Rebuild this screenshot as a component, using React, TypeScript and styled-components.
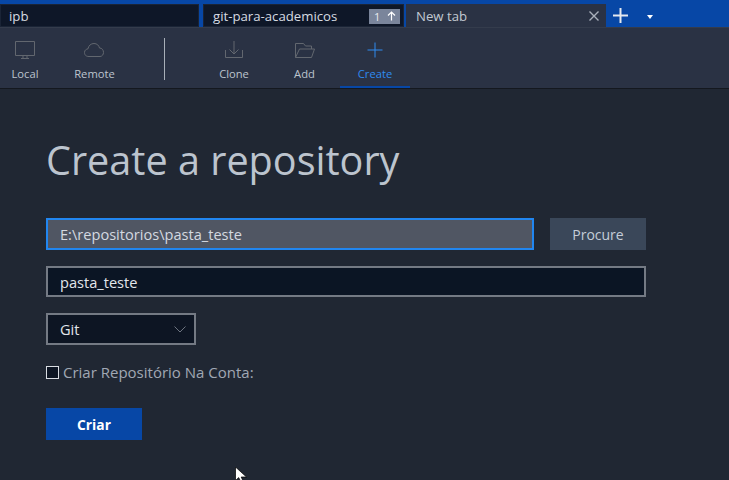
import React from "react";
import styled, { createGlobalStyle } from "styled-components";

const Global = createGlobalStyle`
  html, body { margin: 0; padding: 0; background: #202733; }
  body { font-family: "Open Sans", "Noto Sans", sans-serif; }
  #root { width: 729px; height: 480px; overflow: hidden; }
`;

const Page = styled.div`
  position: relative;
  width: 729px;
  height: 480px;
  background: #202733;
  overflow: hidden;
`;

const TabBar = styled.div`
  display: flex;
  align-items: stretch;
  height: 27px;
  padding-top: 4px;
  box-sizing: border-box;
  background: #0747a6;
`;

const Tab = styled.div<{ $width: number; $gap: number; $active?: boolean; $inset: number }>`
  display: flex;
  align-items: center;
  box-sizing: border-box;
  width: ${(p) => p.$width}px;
  margin-right: ${(p) => p.$gap}px;
  padding: 1px ${(p) => (p.$active ? 7 : 4)}px 0 ${(p) => p.$inset}px;
  font-size: 13.2px;
  color: ${(p) => (p.$active ? "#c2c9d2" : "#d6dbe2")};
  background: ${(p) => (p.$active ? "#2a3244" : "#0e1728")};
  box-shadow: ${(p) => (p.$active ? "none" : "inset 0 0 0 1px #1a2436")};
`;

const TabTitle = styled.span`
  flex: 1;
  white-space: nowrap;
`;

const Badge = styled.span`
  display: flex;
  align-items: center;
  justify-content: space-between;
  width: 31px;
  height: 15px;
  padding: 0 4px 0 5px;
  box-sizing: border-box;
  font-size: 11px;
  background: #7a859b;
  color: #e8ebf0;
`;

const AddTab = styled.div`
  display: flex;
  align-items: center;
  margin-left: 7px;
  width: 16px;
`;

const Caret = styled.div`
  width: 0;
  height: 0;
  margin: 11px 0 0 18px;
  border-left: 3.5px solid transparent;
  border-right: 3.5px solid transparent;
  border-top: 4px solid #fff;
`;

const Toolbar = styled.div`
  display: flex;
  align-items: stretch;
  height: 62px;
  padding-top: 1px;
  box-sizing: border-box;
  background: #2a3244;
  border-top: 1px solid #343c4c;
  border-bottom: 1px solid #14181f;
`;

const ToolButton = styled.div<{ $width: number; $active?: boolean }>`
  display: flex;
  flex-direction: column;
  align-items: center;
  width: ${(p) => p.$width}px;
  height: 59px;
  box-sizing: border-box;
  padding-top: 9px;
  font-size: 11.2px;
  line-height: 15px;
  color: ${(p) => (p.$active ? "#2f8bf0" : "#bcc4ce")};
  border-bottom: 2px solid ${(p) => (p.$active ? "#0747a6" : "transparent")};
`;

const ToolIcon = styled.svg<{ $active?: boolean }>`
  width: 24px;
  height: 24px;
  margin-bottom: 4px;
  fill: none;
  stroke: ${(p) => (p.$active ? "#2f8bf0" : "#62676f")};
  stroke-width: 1;
`;

const ToolDivider = styled.div`
  width: 1px;
  height: 42px;
  margin: 9px 34px 0 25px;
  background: #a8afb8;
`;

const Content = styled.main`
  display: flex;
  flex-direction: column;
  padding: 46px 0 0 46px;
`;

const Title = styled.h1`
  margin: 0 0 33px;
  height: 50px;
  font-size: 39.6px;
  line-height: 50px;
  font-weight: 400;
  color: #bcc4ce;
`;

const PathRow = styled.div`
  display: flex;
  gap: 16px;
  margin-bottom: 16px;
`;

const Field = styled.div<{ $width: number; $focus?: boolean }>`
  display: flex;
  align-items: center;
  box-sizing: border-box;
  width: ${(p) => p.$width}px;
  height: ${(p) => (p.$focus ? 32 : 31)}px;
  padding-left: 12px;
  font-size: 14.6px;
  color: ${(p) => (p.$focus ? "#d4d9e0" : "#e2e6eb")};
  background: ${(p) => (p.$focus ? "#505663" : "#0b1524")};
  border: 2px solid ${(p) => (p.$focus ? "#2186f0" : "#747a84")};
`;

const Browse = styled.div`
  display: flex;
  align-items: center;
  justify-content: center;
  width: 96px;
  height: 32px;
  font-size: 14px;
  color: #c4cdd8;
  background: #3a4759;
`;

const Select = styled.div`
  display: flex;
  align-items: center;
  justify-content: space-between;
  box-sizing: border-box;
  width: 150px;
  height: 32px;
  margin-top: 16px;
  padding: 0 8px 0 12px;
  font-size: 14.6px;
  color: #e2e6eb;
  background: #0d1523;
  border: 2px solid #747a84;
`;

const CheckRow = styled.label`
  display: flex;
  align-items: center;
  gap: 4px;
  margin-top: 17px;
  height: 20px;
  font-size: 15px;
  color: #a0a8b4;
`;

const CheckBox = styled.span`
  width: 13px;
  height: 13px;
  box-sizing: border-box;
  background: #0d1523;
  border: 1px solid #d8dce2;
`;

const Submit = styled.div`
  display: flex;
  align-items: center;
  justify-content: center;
  width: 96px;
  height: 32px;
  margin-top: 26px;
  font-size: 13.8px;
  font-weight: 700;
  color: #fff;
  background: #0747a6;
`;

const Cursor = styled.svg`
  position: absolute;
  left: 235px;
  top: 467px;
  width: 12px;
  height: 14px;
`;

export default function App() {
  return (
    <Page>
      <Global />
      <TabBar>
        <Tab $width={199} $gap={4} $inset={9}>
          <TabTitle>ipb</TabTitle>
        </Tab>
        <Tab $width={201} $gap={2} $inset={10}>
          <TabTitle>git-para-academicos</TabTitle>
          <Badge>
            1
            <svg width="9" height="10" viewBox="0 0 9 10" fill="none" stroke="#fff" strokeWidth="1.2">
              <path d="M4.5 9.5V1M1 4.5 4.5 1 8 4.5" />
            </svg>
          </Badge>
        </Tab>
        <Tab $width={200} $gap={0} $active $inset={10}>
          <TabTitle>New tab</TabTitle>
          <svg width="10" height="10" viewBox="0 0 10 10" stroke="#a9b0bb" strokeWidth="1.4">
            <path d="M0.5 0.5 9.5 9.5M9.5 0.5 0.5 9.5" />
          </svg>
        </Tab>
        <AddTab>
          <svg width="15" height="15" viewBox="0 0 15 15" stroke="#e4e8ee" strokeWidth="2">
            <path d="M7.5 0V15M0 7.5H15" />
          </svg>
        </AddTab>
        <Caret />
      </TabBar>
      <Toolbar>
        <ToolButton $width={50}>
          <ToolIcon viewBox="0 0 24 24">
            <path d="M2.500 3.500h19v14h-19zM8 20.500h8M10 17.500v3M14 17.500v3" />
          </ToolIcon>
          Local
        </ToolButton>
        <ToolButton $width={89}>
          <ToolIcon viewBox="0 0 24 24">
            <path d="M6 18.500C2.500 18.500 1.500 16.500 1.500 14.500 1.500 12 3.500 11 5 10.800 5.500 7.500 8 5.500 11 5.500 14 5.500 16 7.500 16.500 10 19 10 20.500 12 20.500 14.500 20.500 16.500 19 18.500 17 18.500Z" />
          </ToolIcon>
          Remote
        </ToolButton>
        <ToolDivider />
        <ToolButton $width={70}>
          <ToolIcon viewBox="0 0 24 24">
            <path d="M12 3v13M7.500 11.500 12 16l4.500-4.500M3.500 12v7.500h17V12" />
          </ToolIcon>
          Clone
        </ToolButton>
        <ToolButton $width={71}>
          <ToolIcon viewBox="0 0 24 24">
            <path d="M2.500 19.500V5.500h8l2 2.500h6v3M2.500 19.500h16l3-8.500H6.500Z" />
          </ToolIcon>
          Add
        </ToolButton>
        <ToolButton $width={70} $active>
          <ToolIcon viewBox="0 0 24 24" $active>
            <path d="M12 4.500v15M4.500 12h15" />
          </ToolIcon>
          Create
        </ToolButton>
      </Toolbar>
      <Content>
        <Title>Create a repository</Title>
        <PathRow>
          <Field $width={488} $focus>
            E:\repositorios\pasta_teste
          </Field>
          <Browse>Procure</Browse>
        </PathRow>
        <Field $width={600}>pasta_teste</Field>
        <Select>
          Git
          <svg width="12" height="7" viewBox="0 0 12 7" fill="none" stroke="#6d7480" strokeWidth="1">
            <path d="M0.500 0.500 6 6 11.500 0.500" />
          </svg>
        </Select>
        <CheckRow>
          <CheckBox />
          Criar Repositório Na Conta:
        </CheckRow>
        <Submit>Criar</Submit>
      </Content>
      <Cursor viewBox="0 0 12 14">
        <path d="M0.500 0V13.500L3.700 10.600 5.500 14H8L6.200 10H11.500Z" fill="#fff" stroke="#000" strokeWidth="0.7" />
      </Cursor>
    </Page>
  );
}
